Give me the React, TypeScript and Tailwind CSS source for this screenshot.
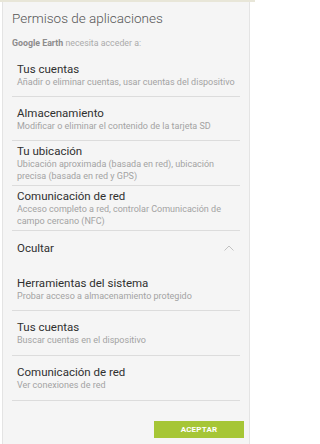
import React from "react";

const font = { fontFamily: "Roboto, 'Noto Sans', 'Liberation Sans', sans-serif" };

function Row({ title, lines, h }: { title: string; lines: string[]; h: string }) {
  return (
    <div className={`mx-[9px] pl-[5px] border-b border-[#dcdcdc] flex flex-col justify-center ${h}`}>
      <div className="text-[11.5px] leading-[14px] text-[#303030]">{title}</div>
      {lines.map((l, i) => (
        <div key={i} className="text-[9px] leading-[12px] text-[#a3a3a3] whitespace-nowrap">
          {l}
        </div>
      ))}
    </div>
  );
}

export default function App() {
  return (
    <div className="w-[255px] h-[444px] bg-white overflow-hidden" style={font}>
      <div className="h-[2px] bg-[#e8e6d8]" />
      <div className="ml-[2px] mr-[5px] h-[442px] bg-[#f5f5f5] border-l border-r border-[#e4e4e4] flex flex-col">
        <div className="pl-[9px] pt-[7px] h-[33px] text-[13.5px] leading-[18px] font-light text-[#555]">
          Permisos de aplicaciones
        </div>
        <div className="pl-[9px] h-[18px] flex items-center text-[8.8px] text-[#ababab]">
          <span className="font-bold text-[#8c8c8c]">Google Earth</span>&nbsp;necesita acceder a:
        </div>
        <Row h="h-[44px]" title="Tus cuentas" lines={["Añadir o eliminar cuentas, usar cuentas del dispositivo"]} />
        <Row h="h-[44px]" title="Almacenamiento" lines={["Modificar o eliminar el contenido de la tarjeta SD"]} />
        <Row
          h="h-[45px]"
          title="Tu ubicación"
          lines={["Ubicación aproximada (basada en red), ubicación", "precisa (basada en red y GPS)"]}
        />
        <Row
          h="h-[45px]"
          title="Comunicación de red"
          lines={["Acceso completo a red, controlar Comunicación de", "campo cercano (NFC)"]}
        />
        <div className="mx-[9px] pl-[5px] pr-[6px] h-[36px] flex items-center justify-between">
          <span className="text-[11.5px] text-[#303030]">Ocultar</span>
          <svg width="10" height="6" viewBox="0 0 10 6" fill="none" className="-mt-[2px]">
            <path d="M0.5 5.5 L5 1 L9.5 5.5" stroke="#c2c2c2" strokeWidth="1" />
          </svg>
        </div>
        <Row h="h-[44px]" title="Herramientas del sistema" lines={["Probar acceso a almacenamiento protegido"]} />
        <Row h="h-[45px]" title="Tus cuentas" lines={["Buscar cuentas en el dispositivo"]} />
        <Row h="h-[45px]" title="Comunicación de red" lines={["Ver conexiones de red"]} />
        <div className="flex justify-end pr-[5px] mt-[20px]">
          <button className="w-[90px] h-[17px] bg-[#a6c636] text-white text-[8px] font-bold tracking-[0.2px] flex items-center justify-center">
            ACEPTAR
          </button>
        </div>
      </div>
    </div>
  );
}
